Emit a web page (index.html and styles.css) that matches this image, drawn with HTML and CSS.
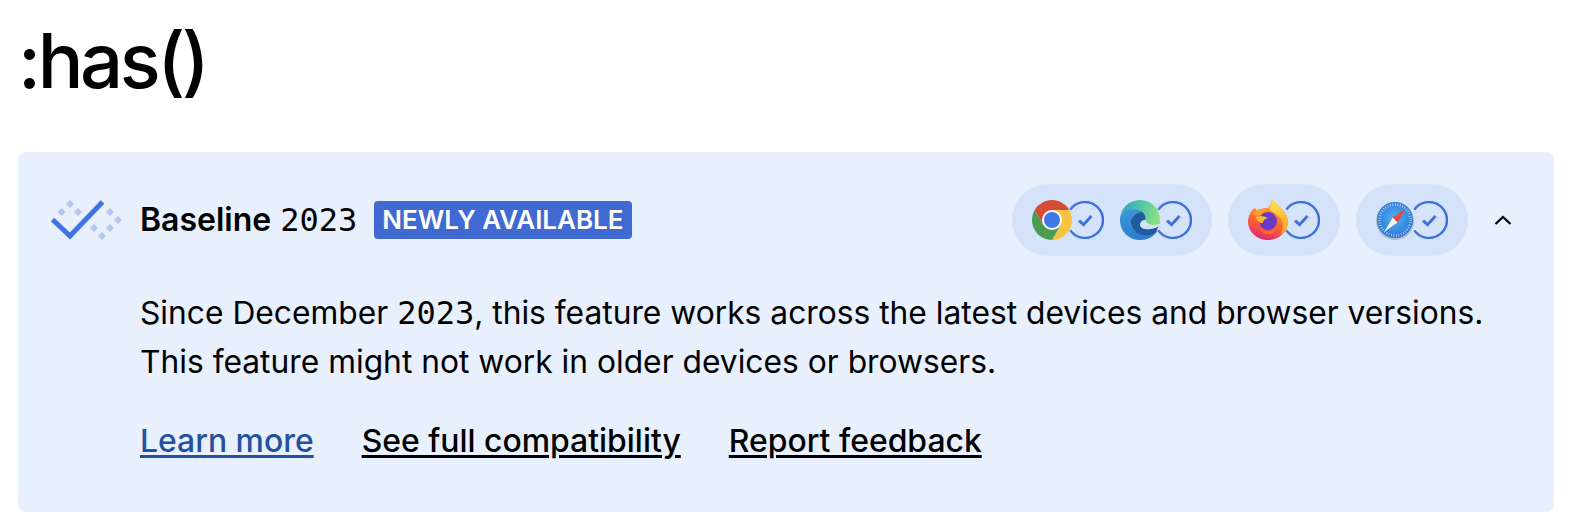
FILE: index.html
```html
<!DOCTYPE html>
<html lang="en">
<head>
  <meta charset="UTF-8" />
  <title>:has()</title>
  <link rel="stylesheet" href="styles.css">
</head>
<body>

  <h1 class="page-title">:has()</h1>

  <section class="baseline-card">
    <div class="baseline-head">
      <svg class="baseline-logo" viewBox="0 0 72 40" width="72" height="40">
        <g fill="#b5c6eb">
          <path d="M20 0l4 4-4 4-4-4z"/>
          <path d="M11.5 8l4 4-4 4-4-4z"/>
          <path d="M28 8l4 4-4 4-4-4z"/>
          <path d="M60 8l4 4-4 4-4-4z"/>
          <path d="M68 16l4 4-4 4-4-4z"/>
          <path d="M44 24l4 4-4 4-4-4z"/>
          <path d="M60 24l4 4-4 4-4-4z"/>
          <path d="M52 32l4 4-4 4-4-4z"/>
        </g>
        <path d="M2.5 19.5L20 36 52.5 2" fill="none" stroke="#3f73e6" stroke-width="5"/>
      </svg>
      <div class="baseline-title"><strong>Baseline</strong> <span class="year">2023</span></div>
      <span class="badge">NEWLY AVAILABLE</span>

      <div class="browsers">
        <div class="browser-pill">
          <div class="browser">
            <svg class="browser-icon" viewBox="0 0 40 40" width="40" height="40">
              <path d="M37.3 10A20 20 0 0 0 2.7 10L11.34 25 20 10z" fill="#d64b36"/>
              <path d="M37.3 10H20l8.66 15L20 40A20 20 0 0 0 37.3 10z" fill="#f5c443"/>
              <path d="M2.7 10A20 20 0 0 0 20 40l8.66-15H11.34z" fill="#4a9c50"/>
              <circle cx="20" cy="20" r="10" fill="#fff"/>
              <circle cx="20" cy="20" r="8" fill="#3f78e6"/>
            </svg>
            <svg class="check" viewBox="0 0 38 38" width="38" height="38">
              <path d="M4.3 8.6A18 18 0 1 1 4.3 29.4" class="check-ring"/>
              <path d="M13 19.5l4.5 4.2 8-8.7" class="check-tick"/>
            </svg>
          </div>
          <div class="browser">
            <svg class="browser-icon" viewBox="0 0 40 40" width="40" height="40">
              <defs>
                <linearGradient id="edgeTop" x1="0" y1="0.3" x2="1" y2="0.5">
                  <stop offset="0" stop-color="#2f9fc4"/>
                  <stop offset="0.5" stop-color="#4fc7a6"/>
                  <stop offset="1" stop-color="#8ee081"/>
                </linearGradient>
                <linearGradient id="edgeBlue" x1="0" y1="0" x2="0.6" y2="1">
                  <stop offset="0" stop-color="#3b97dc"/>
                  <stop offset="1" stop-color="#2b7cca"/>
                </linearGradient>
              </defs>
              <path d="M0 20A20 20 0 0 1 40 20Q40 24 39.5 24C33 26 27 25 25 20 26 15 14 7 0 20z" fill="url(#edgeTop)"/>
              <path d="M0.1 18C4 9 15 7 22 12 15 12 10 18 11 24 12 32 22 38 38 30 34 37 27 40 20 40 8 40 -1 30 0.100 18z" fill="url(#edgeBlue)"/>
              <path d="M22 12C25 14 26 17 25 20 21 20 19 24 21 27 24 30 31 30 38.500 26.500 36 33 34 33 33 34 22 38 12 32 11 24 10 18 15 12 22 12z" fill="#1f5aa3"/>
              <path d="M25 20C21 20 19 24 21 27 24 30 31 30 38.500 26.500L39.500 24C33 26 27 25 25 20z" fill="#cfe4ee"/>
            </svg>
            <svg class="check" viewBox="0 0 38 38" width="38" height="38">
              <path d="M4.3 8.6A18 18 0 1 1 4.3 29.4" class="check-ring"/>
              <path d="M13 19.5l4.5 4.2 8-8.7" class="check-tick"/>
            </svg>
          </div>
        </div>

        <div class="browser-pill">
          <div class="browser">
            <svg class="browser-icon" viewBox="0 0 40 40" width="40" height="40">
              <defs>
                <linearGradient id="foxBody" x1="0.7" y1="0" x2="0.4" y2="1">
                  <stop offset="0" stop-color="#ffb52e"/>
                  <stop offset="0.55" stop-color="#ff6a2b"/>
                  <stop offset="1" stop-color="#e22a6f"/>
                </linearGradient>
                <linearGradient id="foxFlame" x1="0.3" y1="0" x2="0.7" y2="1">
                  <stop offset="0" stop-color="#ffe14d"/>
                  <stop offset="1" stop-color="#ffa02a"/>
                </linearGradient>
              </defs>
              <path d="M3 12C4 10 6 8.500 7 8L9 11C12 8.500 17 7.500 20 8 22 6 23.500 3 24 0 27 3 31 5 34 9 38 14 40 18 40 21 40 32 31 40 20 40 8 40 0 31 0 21 0 18 1.500 14.500 3 12z" fill="url(#foxBody)"/>
              <path d="M24 0C27 3 31 5 34 9 38 14 40 18 40 21 40 27 37 32 32 35 35 30 36 24 33 19 30 14 24 12 21 9 23 6 24 3 24 0z" fill="url(#foxFlame)"/>
              <path d="M9 10C13 8 18 9 20 11 15 11 14 13 13 15 11 16 7 16 5 14 6 12 7 11 9 10z" fill="#ffa02e"/>
              <circle cx="20" cy="21" r="9" fill="#6a3bc4"/>
              <path d="M8 17C12 15 16 16 20 18 16 19 15 21 15 23 11 23 9 21 8 17z" fill="#ffb53a"/>
              <path d="M11 27C15 32 24 33 29 27 28 33 23 35 18 34 14 33 12 30 11 27z" fill="#ff6a2b"/>
            </svg>
            <svg class="check" viewBox="0 0 38 38" width="38" height="38">
              <path d="M4.3 8.6A18 18 0 1 1 4.3 29.4" class="check-ring"/>
              <path d="M13 19.5l4.5 4.2 8-8.7" class="check-tick"/>
            </svg>
          </div>
        </div>

        <div class="browser-pill">
          <div class="browser">
            <svg class="browser-icon" viewBox="0 0 40 40" width="40" height="40">
              <defs>
                <radialGradient id="safariFace" cx="0.5" cy="0.45" r="0.6">
                  <stop offset="0" stop-color="#4fb3ee"/>
                  <stop offset="1" stop-color="#2b6fd8"/>
                </radialGradient>
              </defs>
              <circle cx="19" cy="21" r="19" fill="#b4b9c2"/>
              <circle cx="19" cy="20" r="18" fill="url(#safariFace)"/>
              <circle cx="19" cy="20" r="15.500" fill="none" stroke="#cfe6fa" stroke-width="2.500" stroke-dasharray="0.7 1.8"/>
              <path d="M30 8L16.800 17.500 21.500 22.500z" fill="#e8483f"/>
              <path d="M8 32L21.500 22.500 16.800 17.500z" fill="#f4f5f7"/>
            </svg>
            <svg class="check" viewBox="0 0 38 38" width="38" height="38">
              <path d="M4.3 8.6A18 18 0 1 1 4.3 29.4" class="check-ring"/>
              <path d="M13 19.5l4.5 4.2 8-8.7" class="check-tick"/>
            </svg>
          </div>
        </div>

        <svg class="chevron" viewBox="0 0 18 10" width="18" height="10">
          <path d="M1.500 9L9 2l7.500 7" fill="none" stroke="#000" stroke-width="2.200"/>
        </svg>
      </div>
    </div>

    <div class="baseline-body">
      <p>Since December <span class="year">2023</span>, this feature works across the latest devices and browser versions.<br>This feature might not work in older devices or browsers.</p>
      <div class="baseline-links">
        <a href="#" class="link-blue">Learn more</a>
        <a href="#">See full compatibility</a>
        <a href="#">Report feedback</a>
      </div>
    </div>
  </section>

</body>
</html>
```

FILE: styles.css
```css
body {
  margin: 0;
  padding: 0 26px 20px 18px;
  background-color: #fff;
  color: #000;
  font-family: Inter, "Noto Sans", sans-serif;
}

.page-title {
  margin: 0;
  height: 152px;
  padding-top: 14px;
  box-sizing: border-box;
  font-size: 76px;
  line-height: 92px;
  font-weight: 450;
  letter-spacing: -3.4px;
}

/* card */
.baseline-card {
  height: 360px;
  box-sizing: border-box;
  padding: 32px 33px 0 32px;
  background-color: #e8f0fd;
  border-radius: 8px;
}

.baseline-head {
  display: flex;
  align-items: center;
  height: 72px;
}

.baseline-logo {
  flex-shrink: 0;
  margin-right: 18px;
}

.baseline-title {
  font-size: 32px;
  line-height: 36px;
}

.baseline-title strong {
  font-weight: 600;
}

.year {
  font-family: "DejaVu Sans Mono", monospace;
  font-size: 32px;
}

.badge {
  margin-left: 17px;
  padding: 0 8px;
  height: 38px;
  line-height: 38px;
  background-color: #4069d2;
  border-radius: 4px;
  color: #fff;
  font-size: 26px;
  font-weight: 600;
}

/* browser pills */
.browsers {
  display: flex;
  align-items: center;
  gap: 16px;
  margin-left: auto;
}

.browser-pill {
  display: flex;
  align-items: center;
  gap: 16px;
  height: 72px;
  padding: 0 20px;
  background-color: #d5e3fa;
  border-radius: 36px;
}

.browser {
  display: flex;
  align-items: center;
  width: 72px;
}

.browser-icon {
  flex-shrink: 0;
}

.check {
  flex-shrink: 0;
  margin-left: -6px;
}

.check-ring {
  fill: none;
  stroke: #3f72d8;
  stroke-width: 2.4;
}

.check-tick {
  fill: none;
  stroke: #3f72d8;
  stroke-width: 3;
}

.chevron {
  margin: 0 9px 0 10px;
}

/* body text */
.baseline-body {
  padding-left: 90px;
}

.baseline-body p {
  margin: 33px 0 0;
  font-size: 31.75px;
  line-height: 47.5px;
}

.baseline-links {
  display: flex;
  gap: 48px;
  margin-top: 32px;
  font-size: 31.9px;
  line-height: 48px;
  font-weight: 500;
}

.baseline-links a {
  color: #000;
  text-underline-offset: 3px;
  text-decoration-thickness: 2.5px;
}

.baseline-links .link-blue {
  color: #23519f;
}
```
